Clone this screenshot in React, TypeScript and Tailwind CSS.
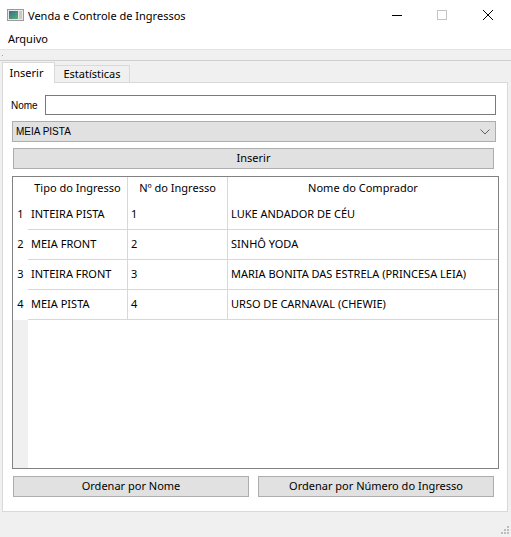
import React from "react";

type Ingresso = {
  tipo: string;
  numero: number;
  nome: string;
};

const ingressos: Ingresso[] = [
  { tipo: "INTEIRA PISTA", numero: 1, nome: "LUKE ANDADOR DE CÉU" },
  { tipo: "MEIA FRONT", numero: 2, nome: "SINHÔ YODA" },
  { tipo: "INTEIRA FRONT", numero: 3, nome: "MARIA BONITA DAS ESTRELA (PRINCESA LEIA)" },
  { tipo: "MEIA PISTA", numero: 4, nome: "URSO DE CARNAVAL (CHEWIE)" },
];

// fonte menor (estilo "MS Shell Dlg") do label e do combo
const shellFont = { fontFamily: '"Liberation Sans", Arial, sans-serif' };

function WindowIcon() {
  return (
    <svg width="17" height="12" viewBox="0 0 17 12">
      <defs>
        <linearGradient id="g" x1="0" y1="0" x2="1" y2="1">
          <stop offset="0" stopColor="#2f6f8f" />
          <stop offset="1" stopColor="#5fae6a" />
        </linearGradient>
      </defs>
      <rect x="0.5" y="0.5" width="16" height="11" fill="#e8e8e8" stroke="#9a9a9a" />
      <rect x="2" y="2" width="9" height="8" fill="url(#g)" />
      <rect x="12" y="2" width="3" height="8" fill="#c9c9c9" />
    </svg>
  );
}

function Chevron() {
  return (
    <svg width="10" height="6" viewBox="0 0 10 6">
      <path d="M0.5 0.5 L5 5 L9.5 0.5" fill="none" stroke="#606060" strokeWidth="1" />
    </svg>
  );
}

function Grip() {
  return (
    <svg width="9" height="9" viewBox="0 0 9 9">
      <rect x="6" y="0" width="2" height="2" fill="#bdbdbd" />
      <rect x="3" y="3" width="2" height="2" fill="#bdbdbd" />
      <rect x="6" y="3" width="2" height="2" fill="#bdbdbd" />
      <rect x="0" y="6" width="2" height="2" fill="#bdbdbd" />
      <rect x="3" y="6" width="2" height="2" fill="#bdbdbd" />
      <rect x="6" y="6" width="2" height="2" fill="#bdbdbd" />
    </svg>
  );
}

export default function App() {
  return (
    <div
      className="w-[511px] h-[537px] bg-[#f0f0f0] flex flex-col text-[11px] text-black overflow-hidden"
      style={{ fontFamily: '"Segoe UI", "Noto Sans", sans-serif' }}
    >
      {/* barra de titulo */}
      <div className="h-[30px] bg-white flex items-center shrink-0">
        <div className="ml-[7px] mr-[4px] flex items-center">
          <WindowIcon />
        </div>
        <span className="leading-none">Venda e Controle de Ingressos</span>
        <div className="ml-auto flex items-center h-full">
          <div className="w-[46px] h-full flex items-center justify-center">
            <div className="w-[10px] h-px bg-black ml-[2px]" />
          </div>
          <div className="w-[46px] h-full flex items-center justify-center">
            <div className="w-[10px] h-[10px] border border-[#c4c4c4]" />
          </div>
          <div className="w-[46px] h-full flex items-center justify-center">
            <svg width="10" height="10" viewBox="0 0 10 10">
              <path d="M0 0 L10 10 M10 0 L0 10" stroke="#000" strokeWidth="1" />
            </svg>
          </div>
        </div>
      </div>

      {/* menu */}
      <div className="h-[19px] bg-white flex items-center shrink-0">
        <span className="ml-[8px]">Arquivo</span>
      </div>

      {/* toolbar vazia */}
      <div className="h-[12px] shrink-0 border-t border-[#e3e3e3] border-b border-b-[#cfcfcf] flex items-center">
        <div className="ml-[2px] w-px h-px bg-[#a0a0a0]" />
      </div>

      {/* abas */}
      <div className="flex items-end pl-[2px] h-[21px] shrink-0">
        <div className="h-[21px] w-[53px] bg-white border-l border-t border-r border-[#d9d9d9] flex items-center justify-center relative z-10 -mb-px">
          <span className="-ml-[4px]">Inserir</span>
        </div>
        <div className="h-[17px] w-[75px] border-t border-r border-[#d9d9d9] flex items-center justify-center">
          Estatísticas
        </div>
      </div>

      <div className="mx-[2px] w-[506px] h-[430px] bg-white border border-[#d9d9d9] shrink-0">
        {/* nome */}
        <div className="flex items-center mt-[12px] h-[20px]">
          <span className="ml-[8px] w-[34px] text-[10px]" style={shellFont}>
            Nome
          </span>
          <input className="w-[451px] h-[20px] border border-[#7a7a7a] outline-none px-1" />
        </div>

        {/* combo */}
        <div className="ml-[9px] mt-[6px] w-[484px] h-[21px] bg-[#e1e1e1] border border-[#adadad] flex items-center pl-[3px] pr-[5px]">
          <span className="text-[10px]" style={shellFont}>
            MEIA PISTA
          </span>
          <span className="ml-auto flex items-center">
            <Chevron />
          </span>
        </div>

        {/* inserir */}
        <div className="ml-[10px] mt-[6px] w-[481px] h-[21px] bg-[#e1e1e1] border border-[#adadad] flex items-center justify-center">
          Inserir
        </div>

        {/* tabela */}
        <div className="ml-[9px] mt-[7px] w-[487px] h-[293px] border border-[#828282] flex">
          <div className="w-[15px] flex flex-col shrink-0">
            <div className="h-[23px] bg-white" />
            {ingressos.map((i) => (
              <div key={i.numero} className="h-[30px] bg-white flex items-center justify-center pb-px">
                {i.numero}
              </div>
            ))}
            <div className="flex-1 bg-[#f0f0f0]" />
          </div>
          <div className="flex-1 flex flex-col">
            <div className="h-[23px] flex shrink-0">
              <div className="w-[100px] border-r border-[#d8d8d8] flex items-center justify-center">Tipo do Ingresso</div>
              <div className="w-[100px] border-r border-[#d8d8d8] flex items-center justify-center">Nº do Ingresso</div>
              <div className="flex-1 flex items-center justify-center">Nome do Comprador</div>
            </div>
            {ingressos.map((i) => (
              <div key={i.numero} className="h-[30px] flex border-b border-[#d8d8d8] shrink-0">
                <div className="w-[100px] border-r border-[#d8d8d8] flex items-center pl-[3px]">{i.tipo}</div>
                <div className="w-[100px] border-r border-[#d8d8d8] flex items-center pl-[3px]">{i.numero}</div>
                <div className="flex-1 flex items-center pl-[3px]">{i.nome}</div>
              </div>
            ))}
          </div>
        </div>

        {/* ordenar */}
        <div className="flex ml-[10px] mt-[7px] gap-[9px]">
          <div className="w-[236px] h-[21px] bg-[#e1e1e1] border border-[#adadad] flex items-center justify-center">
            Ordenar por Nome
          </div>
          <div className="w-[236px] h-[21px] bg-[#e1e1e1] border border-[#adadad] flex items-center justify-center">
            Ordenar por Número do Ingresso
          </div>
        </div>
      </div>

      <div className="flex-1 flex items-end justify-end pr-[1px] pb-[2px]">
        <Grip />
      </div>
    </div>
  );
}
